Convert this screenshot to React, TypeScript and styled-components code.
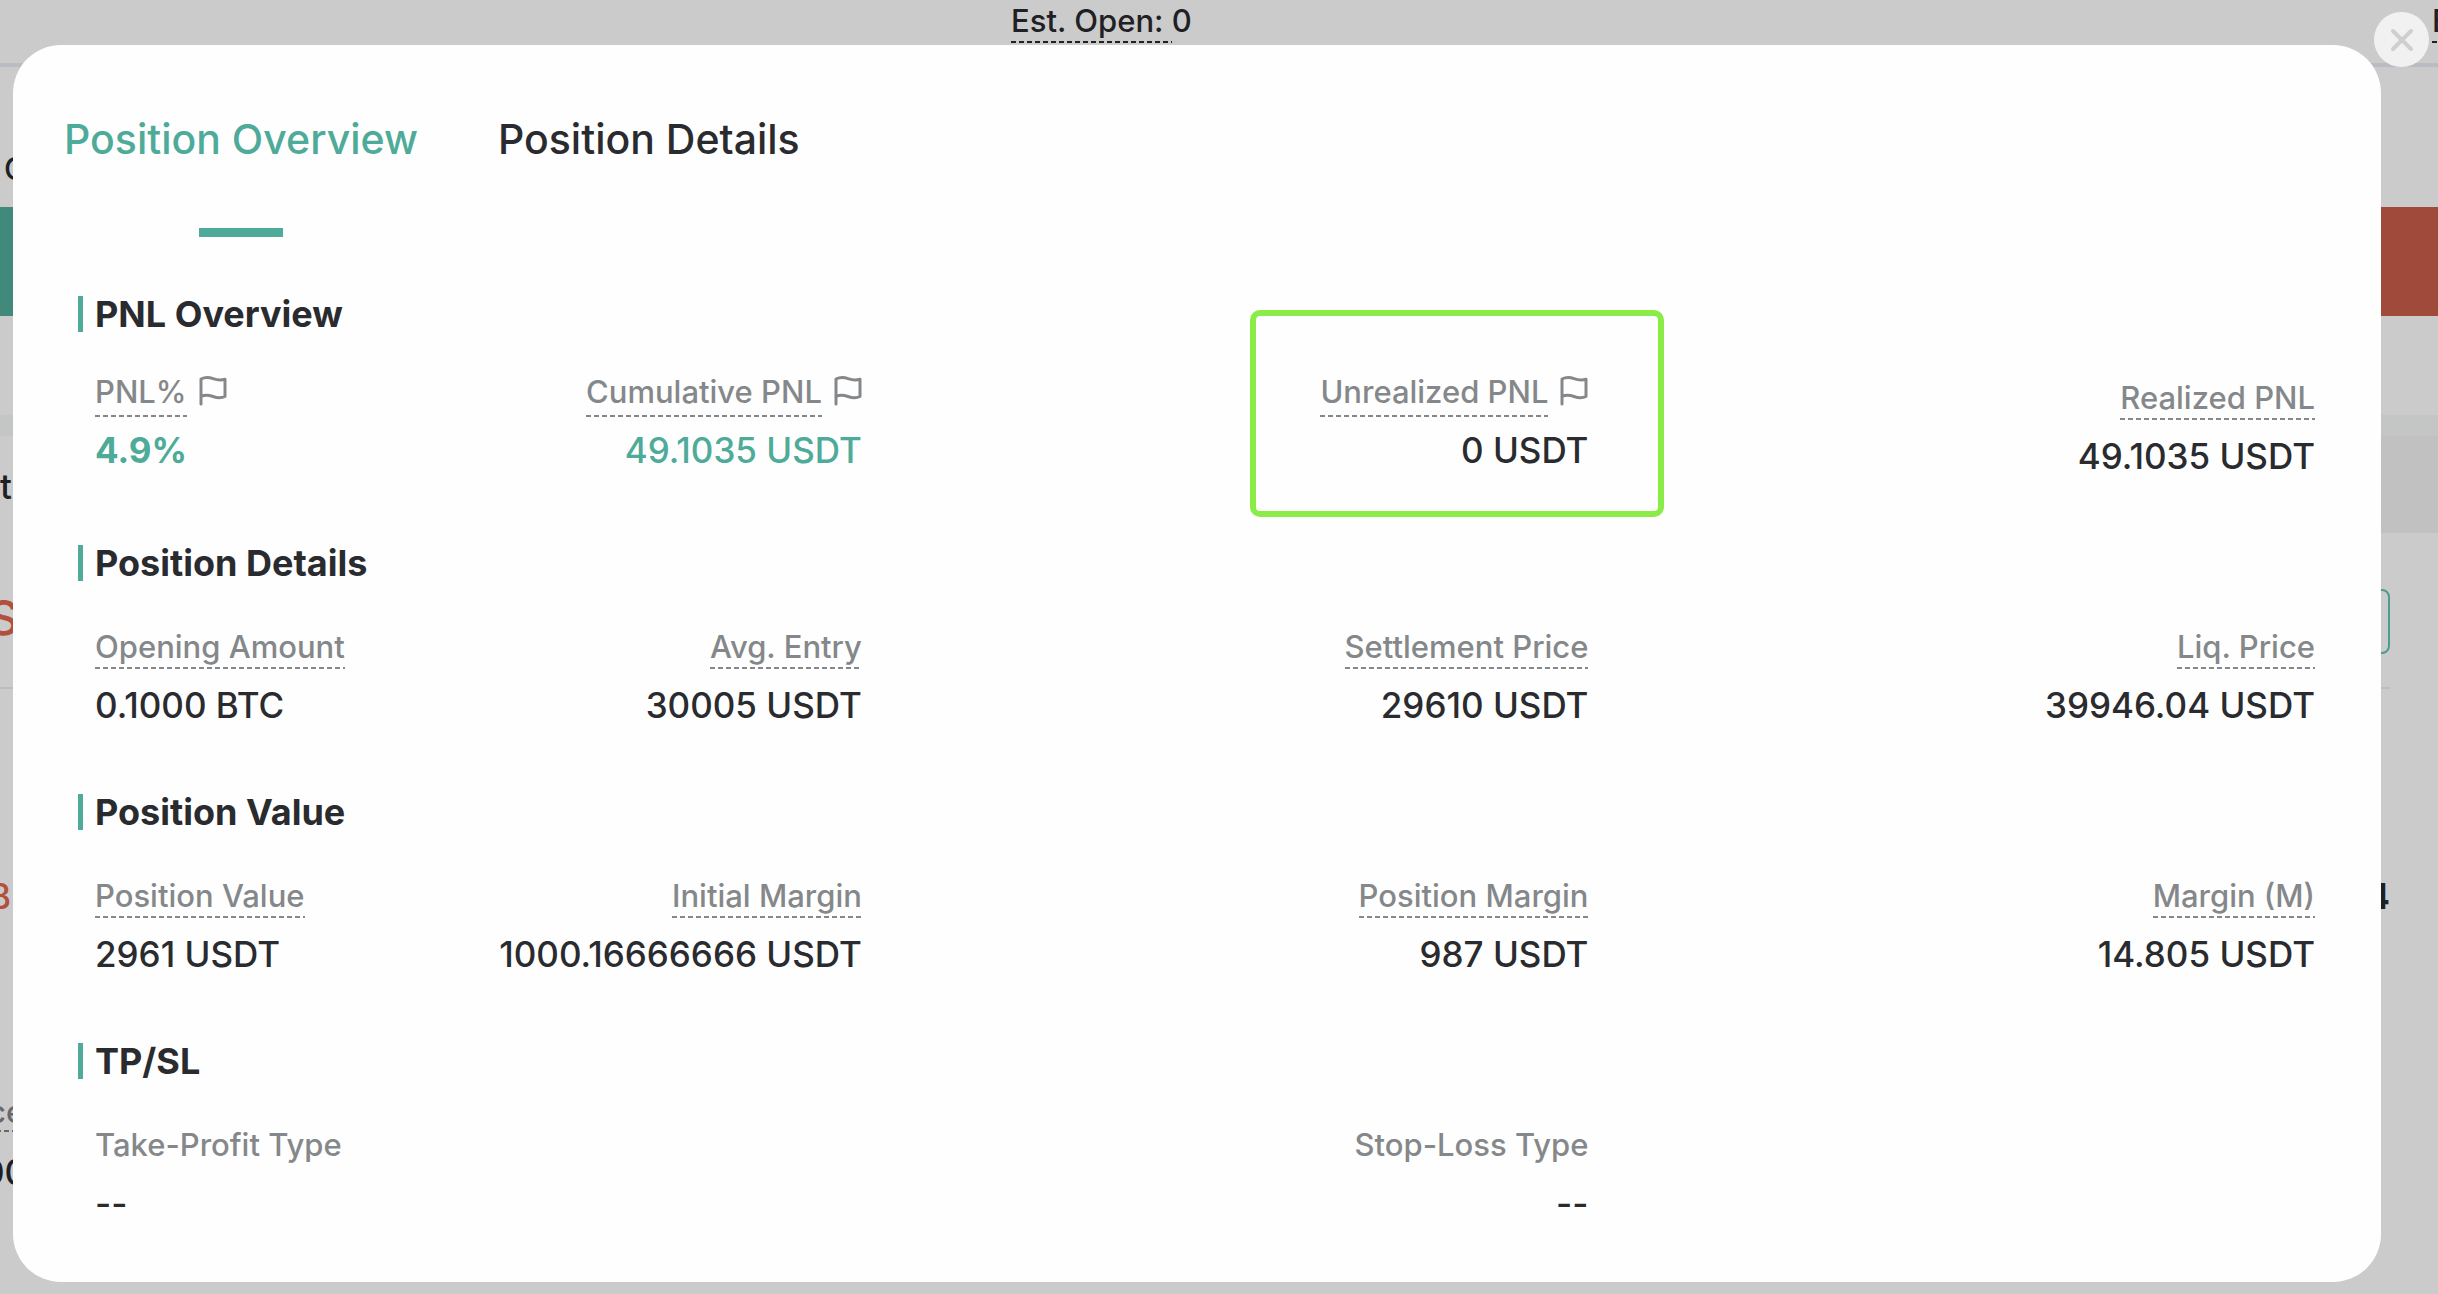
import React, { useState } from "react";
import styled, { createGlobalStyle, css } from "styled-components";

const green = "#4fab99";
const ink = "#2a2b2f";
const muted = "#85888a";

const GlobalStyle = createGlobalStyle`
  *, *::before, *::after { box-sizing: border-box; }
  html, body { margin: 0; background: #cbcbcb; overflow: hidden; }
  body, button { font-family: Inter, "Liberation Sans", sans-serif; color: ${ink}; }
  h2, dl, dd, dt, p { margin: 0; }
  button { border: 0; padding: 0; background: none; cursor: pointer; }
`;

/* Trading page behind the dialog */

const Page = styled.div`
  min-height: 100vh;
  overflow: hidden;
  background: #cbcbcb;
  color: #1f2024;
`;

const EstimateBar = styled.div`
  display: grid;
  grid-template-columns: minmax(0, 1011fr) minmax(0, 1421fr) minmax(0, 6fr);
  height: 67px;
  border-bottom: 4px solid #b9bcc2;
  font-size: 31px;
  font-weight: 500;
  line-height: 41px;
  white-space: nowrap;
`;

const Estimate = styled.span`
  display: flex;
  align-items: flex-start;
`;

const dashed = css`
  background-image: repeating-linear-gradient(90deg, currentColor 0 5px, transparent 5px 8px);
  background-size: 100% 2px;
  background-repeat: no-repeat;
  background-position: left bottom;
`;

const Hint = styled.span`
  ${dashed}
  padding-bottom: 2px;
`;

const CostRow = styled.div`
  height: 140px;
  padding: 82px 0 0 4px;
  font-size: 31px;
  font-weight: 500;
  line-height: 40px;
`;

const TradeButtons = styled.div`
  display: grid;
  grid-template-columns: 1fr 1fr;
  height: 109px;
`;

const TradeButton = styled.button<{ $tone: string }>`
  background: ${(p) => p.$tone};
`;

const Divider = styled.div`
  height: 21px;
  margin-top: 99px;
  background: #c4c6c6;
`;

const PageTabs = styled.div`
  display: grid;
  grid-template-columns: 1fr 3fr;
  height: 97px;
  background: #c1c1c1;
`;

const PageTab = styled.div`
  background: #cbcbcb;
  padding-top: 28px;
  font-size: 35px;
  font-weight: 500;
  line-height: 44px;
`;

const OrderHead = styled.div`
  display: flex;
  justify-content: space-between;
  align-items: center;
  height: 156px;
  margin-right: 48px;
  border-bottom: 2px solid #bcbcc4;
  padding-top: 14px;
  font-size: 48px;
  font-weight: 500;
`;

const OrderAction = styled.button`
  width: 180px;
  height: 65px;
  margin-top: 8px;
  border: 2px solid #4b9d8c;
  border-radius: 8px;
`;

const OrderRow = styled.div<{ $top: number }>`
  display: flex;
  justify-content: space-between;
  margin-right: 48px;
  padding-top: ${(p) => p.$top}px;
  font-size: 35px;
  font-weight: 500;
  line-height: 44px;
`;

const Loss = styled.span`
  margin-left: -12px;
  color: #b24f3d;
`;

const SideLabel = styled.span`
  ${dashed}
  margin-left: -12px;
  font-size: 31px;
  line-height: 40px;
  color: #66686b;
`;

const SideValue = styled.span`
  margin-left: -18px;
`;

/* Dialog */

const Overlay = styled.div`
  position: fixed;
  inset: 0;
  padding: 45px 57px 13px 13px;
`;

const Dialog = styled.section`
  position: relative;
  background: #fefefe;
  border-radius: 48px;
  padding: 65px 66px 55px 51px;
`;

const CloseButton = styled.button`
  position: absolute;
  top: -33px;
  right: -48px;
  display: flex;
  align-items: center;
  justify-content: center;
  width: 55px;
  height: 55px;
  border-radius: 50%;
  background: #f1f1f1;
`;

const Tabs = styled.div`
  display: flex;
  gap: 80px;
  margin-bottom: 59px;
`;

const Tab = styled.button<{ $active: boolean }>`
  display: flex;
  flex-direction: column;
  align-items: center;
  gap: 60px;
  font-size: 41px;
  font-weight: 500;
  line-height: 58px;
  color: ${(p) => (p.$active ? green : ink)};
  &::after {
    content: "";
    width: 84px;
    height: 9px;
    background: ${(p) => (p.$active ? green : "transparent")};
  }
`;

const Sections = styled.div`
  display: flex;
  flex-direction: column;
  gap: 65px;
  padding-left: 14px;
`;

const Heading = styled.h2<{ $tight: boolean }>`
  border-left: 5px solid ${green};
  padding-left: 12px;
  margin-bottom: ${(p) => (p.$tight ? 38 : 44)}px;
  font-size: 36px;
  font-weight: 700;
  line-height: 36px;
`;

const Metrics = styled.dl`
  display: grid;
  grid-template-columns: minmax(0, 8fr) minmax(0, 11fr) minmax(0, 18fr) minmax(0, 18fr);
  align-items: end;
  padding-left: 17px;
`;

const Metric = styled.div<{ $flagged: boolean; $outlined: boolean }>`
  position: relative;
  display: flex;
  flex-direction: column;
  align-items: flex-end;
  white-space: nowrap;
  padding-bottom: ${(p) => (p.$flagged ? 6 : 0)}px;
  &:first-child {
    align-items: flex-start;
  }
  ${(p) =>
    p.$outlined &&
    css`
      &::after {
        content: "";
        position: absolute;
        top: -60px;
        right: -76px;
        width: 414px;
        height: 207px;
        border: 6px solid #8aec46;
        border-radius: 10px;
      }
    `}
`;

const Label = styled.dt`
  display: flex;
  align-items: flex-start;
  gap: 12px;
  height: 56px;
  font-size: 31px;
  font-weight: 500;
  line-height: 44px;
  color: ${muted};
`;

const LabelText = styled.span<{ $dashed: boolean; $flagged: boolean }>`
  padding-bottom: ${(p) => (p.$flagged ? 3 : 0)}px;
  ${(p) => p.$dashed && dashed}
`;

const FlagIcon = styled.svg`
  margin-top: 6px;
`;

const Value = styled.dd<{ $tone: string; $bold: boolean }>`
  font-size: 35px;
  font-weight: ${(p) => (p.$bold ? 700 : 500)};
  line-height: 48px;
  color: ${(p) => p.$tone};
`;

type Entry = {
  label: string;
  value: string;
  flag?: boolean;
  tone?: string;
  bold?: boolean;
  outlined?: boolean;
  plain?: boolean;
};

const sections: { title: string; tight?: boolean; entries: (Entry | null)[] }[] = [
  {
    title: "PNL Overview",
    tight: true,
    entries: [
      { label: "PNL%", value: "4.9%", flag: true, tone: green, bold: true },
      { label: "Cumulative PNL", value: "49.1035 USDT", flag: true, tone: green },
      { label: "Unrealized PNL", value: "0 USDT", flag: true, outlined: true },
      { label: "Realized PNL", value: "49.1035 USDT" },
    ],
  },
  {
    title: "Position Details",
    entries: [
      { label: "Opening Amount", value: "0.1000 BTC" },
      { label: "Avg. Entry", value: "30005 USDT" },
      { label: "Settlement Price", value: "29610 USDT" },
      { label: "Liq. Price", value: "39946.04 USDT" },
    ],
  },
  {
    title: "Position Value",
    entries: [
      { label: "Position Value", value: "2961 USDT" },
      { label: "Initial Margin", value: "1000.16666666 USDT" },
      { label: "Position Margin", value: "987 USDT" },
      { label: "Margin (M)", value: "14.805 USDT" },
    ],
  },
  {
    title: "TP/SL",
    entries: [
      { label: "Take-Profit Type", value: "--", plain: true },
      null,
      { label: "Stop-Loss Type", value: "--", plain: true },
    ],
  },
];

const Flag = () => (
  <FlagIcon width="28" height="30" viewBox="0 0 28 30" fill="none" stroke={muted} strokeWidth="3" strokeLinejoin="round" strokeLinecap="round" aria-hidden="true">
    <path d="M2 28V3C6 1 10 1.200 14 2.600S22 4.500 26 3.200V20.500C22 22.500 18 22 14 20.500S6 18.500 2 20.500" />
  </FlagIcon>
);

export default function App() {
  const [tab, setTab] = useState(0);
  return (
    <>
      <GlobalStyle />
      <Page>
        <EstimateBar>
          <span />
          <Estimate><Hint>Est. Open:&nbsp;</Hint>0</Estimate>
          <Estimate><Hint>E</Hint></Estimate>
        </EstimateBar>
        <CostRow>C</CostRow>
        <TradeButtons>
          <TradeButton $tone="#41897b" aria-label="Open long" />
          <TradeButton $tone="#9f4a3a" aria-label="Open short" />
        </TradeButtons>
        <Divider />
        <PageTabs><PageTab>t</PageTab></PageTabs>
        <OrderHead>
          <Loss>S</Loss>
          <OrderAction aria-label="Share" />
        </OrderHead>
        <OrderRow $top={185}><Loss>B</Loss><b>4</b></OrderRow>
        <OrderRow $top={174}><SideLabel>ce</SideLabel></OrderRow>
        <OrderRow $top={18}><SideValue>00</SideValue></OrderRow>
      </Page>
      <Overlay>
        <Dialog role="dialog" aria-label="Position">
          <CloseButton aria-label="Close">
            <svg width="24" height="24" viewBox="0 0 24 24" stroke="#cfcfcf" strokeWidth="4" strokeLinecap="round" aria-hidden="true">
              <path d="M3 3L21 21M21 3L3 21" />
            </svg>
          </CloseButton>
          <Tabs role="tablist">
            {["Position Overview", "Position Details"].map((name, i) => (
              <Tab key={name} role="tab" aria-selected={tab === i} $active={tab === i} onClick={() => setTab(i)}>
                {name}
              </Tab>
            ))}
          </Tabs>
          <Sections>
            {sections.map((s) => (
              <div key={s.title}>
                <Heading $tight={!!s.tight}>{s.title}</Heading>
                <Metrics>
                  {s.entries.map((e, i) =>
                    e ? (
                      <Metric key={e.label} $flagged={!!e.flag} $outlined={!!e.outlined}>
                        <Label>
                          <LabelText $dashed={!e.plain} $flagged={!!e.flag}>{e.label}</LabelText>
                          {e.flag && <Flag />}
                        </Label>
                        <Value $tone={e.tone ?? ink} $bold={!!e.bold}>{e.value}</Value>
                      </Metric>
                    ) : (
                      <div key={i} />
                    )
                  )}
                </Metrics>
              </div>
            ))}
          </Sections>
        </Dialog>
      </Overlay>
    </>
  );
}
